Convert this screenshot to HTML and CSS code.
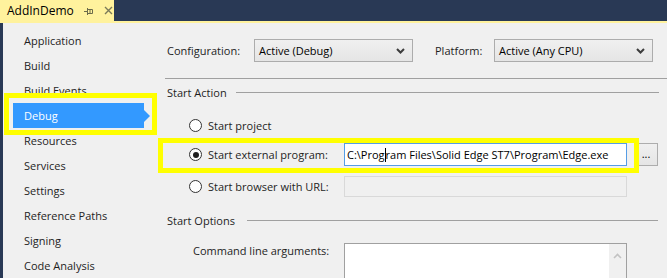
FILE: index.html
```html
<!DOCTYPE html>
<html>
<head>
<meta charset="utf-8">
<link rel="stylesheet" href="styles.css">
</head>
<body>
<div class="tabbar">
  <div class="tab">
    <span class="tab-title">AddInDemo</span>
    <svg class="pin" width="10" height="8" viewBox="0 0 10 8"><path d="M0 4.5H3.5M3.5 1V8M3.5 2.5H8.5V6.5H3.5M6 2.5V6.5" fill="none" stroke="#6b6b4a" stroke-width="1"/></svg>
    <svg class="close" width="9" height="9" viewBox="0 0 9 9"><path d="M1 1L8 8M8 1L1 8" stroke="#7a7a5a" stroke-width="1.4"/></svg>
  </div>
</div>
<div class="accent"></div>
<div class="main">
  <ul class="sidebar">
    <li class="nav">Application</li>
    <li class="nav">Build</li>
    <li class="nav">Build Events</li>
    <li class="nav active"><span class="nav-label">Debug</span><span class="hl hl-nav"></span></li>
    <li class="nav">Resources</li>
    <li class="nav">Services</li>
    <li class="nav">Settings</li>
    <li class="nav">Reference Paths</li>
    <li class="nav">Signing</li>
    <li class="nav">Code Analysis</li>
  </ul>
  <div class="content">
    <div class="toprow">
      <span class="lbl lbl-config">Configuration:</span>
      <div class="combo"><span>Active (Debug)</span><svg class="chev" width="9" height="6" viewBox="0 0 9 6"><path d="M1 1L4.5 4.5L8 1" fill="none" stroke="#3c3c3c" stroke-width="2"/></svg></div>
      <span class="lbl lbl-platform">Platform:</span>
      <div class="combo"><span>Active (Any CPU)</span><svg class="chev" width="9" height="6" viewBox="0 0 9 6"><path d="M1 1L4.5 4.5L8 1" fill="none" stroke="#3c3c3c" stroke-width="2"/></svg></div>
    </div>
    <div class="sep"></div>
    <div class="group-head head-action"><span>Start Action</span><i class="rule"></i></div>
    <div class="radio-row row1">
      <span class="radio"></span><span class="rlabel">Start project</span>
    </div>
    <div class="radio-row row2">
      <span class="radio checked"></span><span class="rlabel">Start external program:</span>
      <div class="field focused">C:\Prog<span class="caret"></span>ram Files\Solid Edge ST7\Program\Edge.exe</div>
      <div class="btn">...</div>
      <span class="hl hl-row"></span>
    </div>
    <div class="radio-row row3">
      <span class="radio"></span><span class="rlabel">Start browser with URL:</span>
      <div class="field disabled"></div>
    </div>
    <div class="group-head head-options"><span>Start Options</span><i class="rule"></i></div>
    <div class="cmd-row">
      <span class="cmd-label">Command line arguments:</span>
      <div class="textarea"><div class="scroll"><svg width="9" height="6" viewBox="0 0 9 6"><path d="M1 5L4.5 1.5L8 5" fill="none" stroke="#c2c2c2" stroke-width="1.6"/></svg></div></div>
    </div>
  </div>
</div>
</body>
</html>
```
FILE: styles.css
```css
* { box-sizing: border-box; }
html, body { margin: 0; padding: 0; }
body {
  width: 667px;
  height: 278px;
  overflow: hidden;
  background: #293955;
  font-family: "Open Sans", "Noto Sans", sans-serif;
  font-size: 11px;
  color: #1e1e1e;
}
.tabbar { height: 21px; display: flex; }
.tab {
  width: 114px;
  background: #fff29d;
  display: flex;
  align-items: center;
  padding-left: 7px;
}
.tab-title { font-size: 12px; color: #000; }
.pin { margin-left: 10px; }
.close { margin-left: 10px; }
.accent { height: 2px; background: #fff29d; }
.main {
  display: flex;
  height: 255px;
  border-left: 3px solid #293955;
  background: #f0f0f0;
}
.sidebar {
  list-style: none;
  margin: 0;
  padding: 5px 0 0 0;
  width: 162px;
  flex: none;
}
.nav {
  height: 25px;
  line-height: 25px;
  padding-left: 21px;
  white-space: nowrap;
}
.nav.active {
  position: relative;
  margin-left: 10px;
  width: 131px;
  padding-left: 11px;
  background: #3399ff;
  color: #fff;
}
.nav.active::after {
  content: "";
  position: absolute;
  right: -6px;
  top: 6.5px;
  border-left: 6px solid #3399ff;
  border-top: 6px solid transparent;
  border-bottom: 6px solid transparent;
}
.hl {
  position: absolute;
  border: 5px solid #ffff00;
  pointer-events: none;
  z-index: 2;
}
.hl-nav { left: -9px; top: -10px; width: 153px; height: 42px; }
.content { flex: 1; }
.toprow {
  display: flex;
  align-items: center;
  margin-top: 16px;
  height: 23px;
  padding-left: 2px;
}
.lbl-config { width: 87px; }
.lbl-platform { margin-left: 22px; width: 59px; }
.combo {
  width: 159px;
  height: 23px;
  border: 1px solid #acacac;
  background: linear-gradient(#f0f0f0, #e5e5e5);
  display: flex;
  align-items: center;
  justify-content: space-between;
  padding: 0 7px 0 4px;
  color: #000;
}
.sep { margin-top: 16px; height: 1px; background: #a0a0a0; }
.group-head {
  display: flex;
  align-items: center;
  height: 19px;
  padding-left: 2px;
  padding-right: 8px;
}
.head-action { margin-top: 4px; }
.head-options { margin-top: 14px; padding-right: 9px; }
.rule { flex: 1; height: 1px; background: #a0a0a0; margin-left: 9px; }
.head-options .rule { margin-left: 12px; }
.radio-row {
  display: flex;
  align-items: center;
  padding-left: 24px;
}
.row1 { margin-top: 12px; height: 23px; }
.row2 { margin-top: 6px; height: 23px; position: relative; }
.row3 { margin-top: 10px; height: 21px; }
.radio {
  width: 13px;
  height: 13px;
  border: 1px solid #333;
  border-radius: 50%;
  background: #fff;
  position: relative;
  flex: none;
}
.radio.checked::after {
  content: "";
  position: absolute;
  left: 2.5px;
  top: 2.5px;
  width: 6px;
  height: 6px;
  border-radius: 50%;
  background: #1e1e1e;
}
.rlabel { margin-left: 6px; width: 136px; white-space: nowrap; }
.field {
  width: 283px;
  height: 100%;
  border: 1px solid #d9d9d9;
  background: #f0f0f0;
  white-space: nowrap;
  display: flex;
  align-items: center;
  padding-left: 2px;
  color: #000;
}
.field.focused { border-color: #569de5; background: #fff; }
.caret { display: inline-block; width: 1px; height: 14px; background: #000; }
.btn {
  margin-left: 7px;
  width: 24px;
  height: 23px;
  border: 1px solid #adadad;
  background: linear-gradient(#f0f0f0, #e5e5e5);
  display: flex;
  align-items: center;
  justify-content: center;
  line-height: 1;
  padding-bottom: 3px;
  color: #000;
}
.hl-row { left: -7px; top: -5px; width: 481px; height: 35px; }
.cmd-row {
  display: flex;
  margin-top: 13px;
  padding-left: 28px;
}
.cmd-label { width: 151px; line-height: 16px; padding-top: 0px; }
.textarea {
  width: 283px;
  height: 40px;
  border: 1px solid #a0a0a0;
  border-bottom: none;
  background: #fff;
  display: flex;
  justify-content: flex-end;
}
.scroll {
  width: 17px;
  background: #f0f0f0;
  display: flex;
  justify-content: center;
  padding-top: 9px;
}
.scroll svg { display: block; }
```
